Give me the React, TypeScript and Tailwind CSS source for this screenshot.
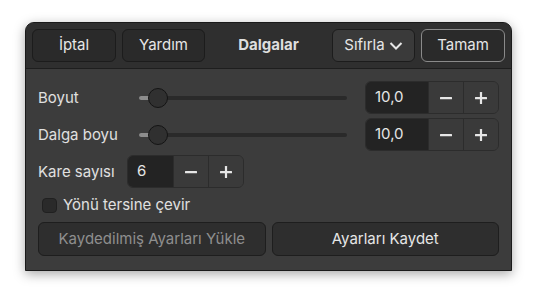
import React, { useState } from 'react';

const font = { fontFamily: 'Inter, "Noto Sans", sans-serif' };

const MinusIcon = () => (
  <svg width="14" height="14" viewBox="0 0 14 14">
    <rect x="1" y="6" width="12" height="2.2" rx="0.5" fill="#e6e6e6" />
  </svg>
);

const PlusIcon = () => (
  <svg width="14" height="14" viewBox="0 0 14 14">
    <rect x="1" y="6" width="12" height="2.2" rx="0.5" fill="#e6e6e6" />
    <rect x="5.9" y="1" width="2.2" height="12" rx="0.5" fill="#e6e6e6" />
  </svg>
);

interface SpinProps {
  value: string;
  entryWidth: string;
}

const SpinButton: React.FC<SpinProps> = ({ value, entryWidth }) => (
  <div className="flex h-[33px] rounded-[6px] border border-[#2c2c2c] overflow-hidden shrink-0">
    <div className={`${entryWidth} bg-[#232323] flex items-center pl-[9px] text-[15px] text-[#e6e6e6]`}>{value}</div>
    <button className="w-[35px] bg-[#3a3a3a] border-l border-[#2c2c2c] flex items-center justify-center">
      <MinusIcon />
    </button>
    <button className="w-[35px] bg-[#3a3a3a] border-l border-[#2c2c2c] flex items-center justify-center">
      <PlusIcon />
    </button>
  </div>
);

const Slider: React.FC = () => (
  <div className="relative flex-1 h-[22px] flex items-center ml-[2px] mr-[10px]">
    <div className="w-full h-[4px] rounded-full bg-[#2a2a2a]" />
    <div className="absolute left-0 w-[12px] h-[4px] rounded-l-full bg-[#8c8c8c]" />
    <div className="absolute left-[9px] w-[20px] h-[20px] rounded-full bg-[#303030] border border-[#141414]" />
  </div>
);

export default function App() {
  const [reverse, setReverse] = useState(false);

  return (
    <div className="w-[538px] h-[300px] bg-white pt-[22px] pl-[25px]" style={font}>
      <div className="w-[487px] h-[249px] flex flex-col rounded-t-[9px] border border-[#1a1a1a] bg-[#3c3c3c] shadow-[0_3px_12px_rgba(0,0,0,0.35)] overflow-hidden">
        {/* header bar */}
        <div className="h-[46px] shrink-0 bg-[#2f2f2f] border-b border-[#1e1e1e] flex items-center px-[6px] gap-[6px]">
          <button className="w-[84px] h-[33px] rounded-[6px] bg-[#2a2a2a] border border-[#1c1c1c] text-[15px] text-[#e6e6e6]">İptal</button>
          <button className="w-[83px] h-[33px] rounded-[6px] bg-[#2a2a2a] border border-[#1c1c1c] text-[15px] text-[#e6e6e6]">Yardım</button>
          <div className="flex-1 text-center font-bold text-[15px] text-[#dedede]">Dalgalar</div>
          <button className="w-[83px] h-[33px] rounded-[6px] bg-[#3a3a3a] border border-[#1c1c1c] text-[15px] text-[#e6e6e6] flex items-center justify-center gap-[4px]">
            Sıfırla
            <svg width="14" height="10" viewBox="0 0 14 10">
              <path d="M1.5 2 L7 7.5 L12.5 2" stroke="#e6e6e6" strokeWidth="2" fill="none" />
            </svg>
          </button>
          <button className="w-[84px] h-[33px] rounded-[6px] bg-[#2a2a2a] border border-[#8a8a8a] text-[15px] text-[#e6e6e6]">Tamam</button>
        </div>

        {/* content */}
        <div className="flex-1 flex flex-col px-[12px] pt-[12px] text-[15px] text-[#e0e0e0]">
          <div className="flex items-center gap-[8px]">
            <span className="w-[91px] pt-[2px]">Boyut</span>
            <Slider />
            <SpinButton value="10,0" entryWidth="w-[62px]" />
          </div>
          <div className="flex items-center gap-[8px] mt-[4px]">
            <span className="w-[91px] pt-[2px]">Dalga boyu</span>
            <Slider />
            <SpinButton value="10,0" entryWidth="w-[62px]" />
          </div>
          <div className="flex items-center mt-[4px]">
            <span className="w-[89px] pt-[2px]">Kare sayısı</span>
            <SpinButton value="6" entryWidth="w-[45px]" />
          </div>
          <label className="flex items-center h-[20px] gap-[6px] mt-[7px] ml-[4px] cursor-pointer" onClick={() => setReverse(!reverse)}>
            <span className="w-[15px] h-[15px] rounded-[4px] bg-[#2a2a2a] border border-[#202020]" />
            <span>Yönü tersine çevir</span>
          </label>
          <div className="flex gap-[6px] mt-[7px]">
            <button className="flex-1 h-[34px] rounded-[6px] bg-[#2e2e2e] border border-[#1e1e1e] text-[#8e8e8e]">Kaydedilmiş Ayarları Yükle</button>
            <button className="flex-1 h-[34px] rounded-[6px] bg-[#2e2e2e] border border-[#1e1e1e] text-[#e6e6e6]">Ayarları Kaydet</button>
          </div>
        </div>
      </div>
    </div>
  );
}
